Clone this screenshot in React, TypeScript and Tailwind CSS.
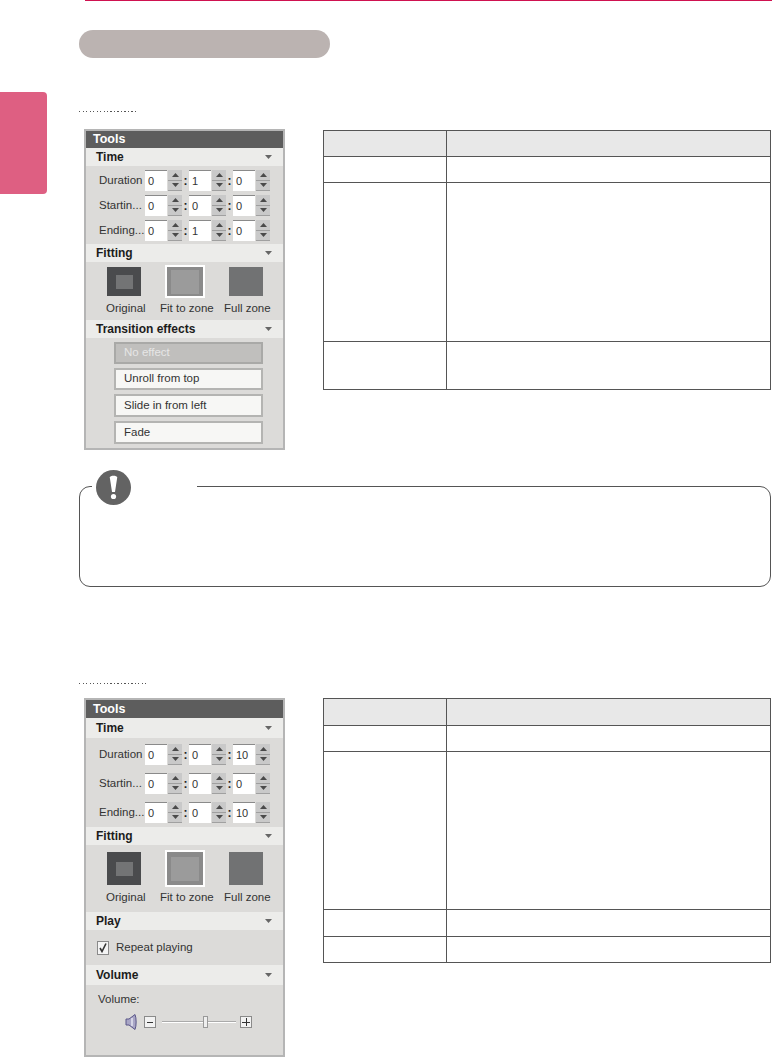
import * as React from 'react';

const Arrow = ({ down = false }: { down?: boolean }) => (
  <svg width="7" height="4" viewBox="0 0 7 4" className="block">
    <path d={down ? 'M0 0H7L3.5 4Z' : 'M0 4H7L3.5 0Z'} fill="#4a4a4a" />
  </svg>
);

const Spin = ({ value }: { value: string }) => (
  <div className="flex items-stretch h-[21px]">
    <div className="w-[22px] bg-white border-t border-[#8a8a8a] pl-[3px] pt-[3px] text-[11px] leading-[14px] text-[#333]">{value}</div>
    <div className="w-[14px] ml-px flex flex-col gap-px bg-[#9f9f9f] border-b border-[#a0a0a0]">
      <div className="flex-1 bg-[#c9c9c9] flex items-center justify-center"><Arrow /></div>
      <div className="flex-1 bg-[#c9c9c9] flex items-center justify-center"><Arrow down /></div>
    </div>
  </div>
);

const TimeRow = ({ label, values }: { label: string; values: string[] }) => (
  <div className="flex items-center">
    <span className="w-[46px] ml-[13px] text-[11.5px] text-[#333] whitespace-nowrap">{label}</span>
    {values.map((v, i) => (
      <React.Fragment key={i}>
        <Spin value={v} />
        {i < 2 && <span className="w-[7px] text-center text-[12px] font-bold leading-none text-[#222]">:</span>}
      </React.Fragment>
    ))}
  </div>
);

const SectionHead = ({ title, className }: { title: string; className: string }) => (
  <div className={`flex items-center justify-between bg-[#ececea] pl-[10px] pr-[11px] ${className}`}>
    <span className="text-[12px] font-bold text-[#1c1c1c]">{title}</span>
    <svg width="7" height="4" viewBox="0 0 7 4"><path d="M0 0H7L3.5 4Z" fill="#666" /></svg>
  </div>
);

const Thumbs = ({ className, boxHeight }: { className: string; boxHeight: string }) => (
  <div className={`flex flex-col ${className}`}>
    <div className="flex items-center pl-[21px]">
      <div className={`w-[34px] ${boxHeight} bg-[#4a4b4d] flex items-center justify-center`}>
        <div className="w-[17px] h-[14px] bg-[#737475]" />
      </div>
      <div className={`w-[36px] ${boxHeight} ml-[26px] bg-[#8a8a8a] outline-2 outline-white flex items-center justify-center`}>
        <div className="w-[28px] h-[24px] bg-[#9b9b9b]" />
      </div>
      <div className={`w-[34px] ${boxHeight} ml-[26px] bg-[#717273]`} />
    </div>
    <div className="flex mt-[4px] text-[11.5px] leading-[16px] text-[#333] whitespace-nowrap">
      <span className="w-[74px] pl-[20px]">Original</span>
      <span className="w-[64px]">Fit to zone</span>
      <span>Full zone</span>
    </div>
  </div>
);

const EffectButton = ({ label, active = false, className }: { label: string; active?: boolean; className: string }) => (
  <div
    className={`ml-[28px] w-[149px] ${className} border-2 flex items-center pl-[8px] text-[11.5px] ${
      active ? 'bg-[#c0bfbd] border-[#a9a9a7] text-[#e6e6e6]' : 'bg-[#f7f7f5] border-[#b4b4b2] text-[#333]'
    }`}
  >
    {label}
  </div>
);

const Speaker = () => (
  <svg width="12" height="16" viewBox="0 0 12 16">
    <path d="M1 5H4L10 0.5C11.5 4 11.5 12 10 15.5L4 11H1Z" fill="#a9a6c6" stroke="#5a5688" strokeWidth="1" />
    <path d="M7 4V12" stroke="#e4e4f0" strokeWidth="1.5" />
  </svg>
);

const Tools = ({ children, className }: { children: React.ReactNode; className: string }) => (
  <div className={`w-[201px] shrink-0 border-2 border-[#b5b5b5] bg-[#dcdbd9] flex flex-col font-['Liberation_Sans',Arial,sans-serif] ${className}`}>
    {children}
  </div>
);

const ToolsTitle = ({ className }: { className: string }) => (
  <div className={`bg-[#5d5d5d] pl-[7px] flex items-center text-[12.5px] font-bold text-white ${className}`}>Tools</div>
);

const cell = 'border border-[#555]';

const SpecTable = ({ rows }: { rows: { h: string; head?: boolean }[] }) => (
  <table className="w-[448px] border-collapse table-fixed">
    <tbody>
      {rows.map((r, i) => (
        <tr key={i} className={`${r.h} ${r.head ? 'bg-[#e8e8e8]' : ''}`}>
          <td className={`${cell} w-[123px]`} />
          <td className={cell} />
        </tr>
      ))}
    </tbody>
  </table>
);

const Dots = ({ className }: { className: string }) => (
  <div className={`h-px bg-[repeating-linear-gradient(90deg,#555_0,#555_1px,transparent_1px,transparent_3.5px)] ${className}`} />
);

export default function App() {
  return (
    <div className="w-[772px] h-[1057px] bg-white overflow-hidden flex">
      <div className="w-[47px] shrink-0 pt-[92px]">
        <div className="h-[102px] bg-[#de5f82] rounded-r-[4px]" />
      </div>

      <div className="w-[725px] pl-[32px] flex flex-col">
        <div className="ml-[6px] h-px bg-[#cf1250]" />
        <div className="mt-[29px] w-[251px] h-[28px] rounded-full bg-[#bbb3b1]" />

        <Dots className="mt-[53px] w-[57px]" />
        <div className="mt-[17px] pl-[5px] flex items-start gap-[38px]">
          <Tools className="h-[321px]">
            <ToolsTitle className="h-[17px]" />
            <SectionHead title="Time" className="h-[18px]" />
            <div className="flex flex-col gap-[4px] pt-[4px]">
              <TimeRow label="Duration" values={['0', '1', '0']} />
              <TimeRow label="Startin..." values={['0', '0', '0']} />
              <TimeRow label="Ending..." values={['0', '1', '0']} />
            </div>
            <SectionHead title="Fitting" className="h-[18px] mt-[3px]" />
            <Thumbs className="pt-[5px]" boxHeight="h-[29px]" />
            <SectionHead title="Transition effects" className="h-[18px] mt-[4px]" />
            <div className="flex flex-col gap-[4px] pt-[4px]">
              <EffectButton label="No effect" active className="h-[22px]" />
              <EffectButton label="Unroll from top" className="h-[22px]" />
              <EffectButton label="Slide in from left" className="h-[23px]" />
              <EffectButton label="Fade" className="h-[23px]" />
            </div>
          </Tools>
          <div className="pt-px">
            <SpecTable rows={[{ h: 'h-[26px]', head: true }, { h: 'h-[26px]' }, { h: 'h-[159px]' }, { h: 'h-[48px]' }]} />
          </div>
        </div>

        <div className="relative mt-[36px] w-[692px] h-[101px] border border-[#555] rounded-[11px]">
          <div className="absolute left-[12px] -top-[17px] w-[105px] h-[36px] bg-white">
            <svg width="35" height="35" viewBox="0 0 35 35" className="ml-[4px]">
              <circle cx="17.5" cy="17.5" r="17.5" fill="#636363" />
              <path d="M13.8 7.5C13.8 5 21.2 5 21.2 7.5L19 22H16Z" fill="#fff" />
              <circle cx="17.5" cy="26.5" r="2.6" fill="#fff" />
            </svg>
          </div>
        </div>

        <Dots className="mt-[96px] w-[67px]" />
        <div className="mt-[14px] pl-[5px] flex items-start gap-[38px]">
          <Tools className="h-[359px]">
            <ToolsTitle className="h-[18px]" />
            <SectionHead title="Time" className="h-[20px]" />
            <div className="flex flex-col gap-[8px] pt-[6px]">
              <TimeRow label="Duration" values={['0', '0', '10']} />
              <TimeRow label="Startin..." values={['0', '0', '0']} />
              <TimeRow label="Ending..." values={['0', '0', '10']} />
            </div>
            <SectionHead title="Fitting" className="h-[18px] mt-[4px]" />
            <Thumbs className="pt-[7px]" boxHeight="h-[33px]" />
            <SectionHead title="Play" className="h-[18px] mt-[7px]" />
            <div className="h-[35px] flex items-center pl-[11px] text-[11.5px] text-[#333]">
              <div className="w-[12px] h-[14px] border border-[#8a8a8a] bg-[#f4f4f4] flex items-center justify-center">
                <svg width="10" height="11" viewBox="0 0 10 11"><path d="M2 6L4 9.5L8 1.5" fill="none" stroke="#333" strokeWidth="1.6" /></svg>
              </div>
              <span className="ml-[7px]">Repeat playing</span>
            </div>
            <SectionHead title="Volume" className="h-[20px]" />
            <div className="pl-[12px] pt-[6px] text-[11.5px] leading-[16px] text-[#333]">Volume:</div>
            <div className="flex items-center mt-[7px] pl-[39px] h-[16px]">
              <Speaker />
              <div className="ml-[7px] w-[12px] h-[12px] border border-[#8a8a8a] bg-[#f2f2f2] flex items-center justify-center">
                <div className="w-[6px] h-px bg-[#333]" />
              </div>
              <div className="relative ml-[6px] w-[74px] h-[2px] bg-[#aaa] border-b border-white">
                <div className="absolute left-[41px] -top-[5px] w-[5px] h-[12px] bg-[#eee] border border-[#999]" />
              </div>
              <div className="relative ml-[4px] w-[12px] h-[12px] border border-[#8a8a8a] bg-[#f2f2f2] flex items-center justify-center">
                <div className="w-[8px] h-px bg-[#333]" />
                <div className="absolute w-px h-[8px] bg-[#333]" />
              </div>
            </div>
          </Tools>
          <div>
            <SpecTable rows={[{ h: 'h-[27px]', head: true }, { h: 'h-[26px]' }, { h: 'h-[158px]' }, { h: 'h-[27px]' }, { h: 'h-[26px]' }]} />
          </div>
        </div>
      </div>
    </div>
  );
}
